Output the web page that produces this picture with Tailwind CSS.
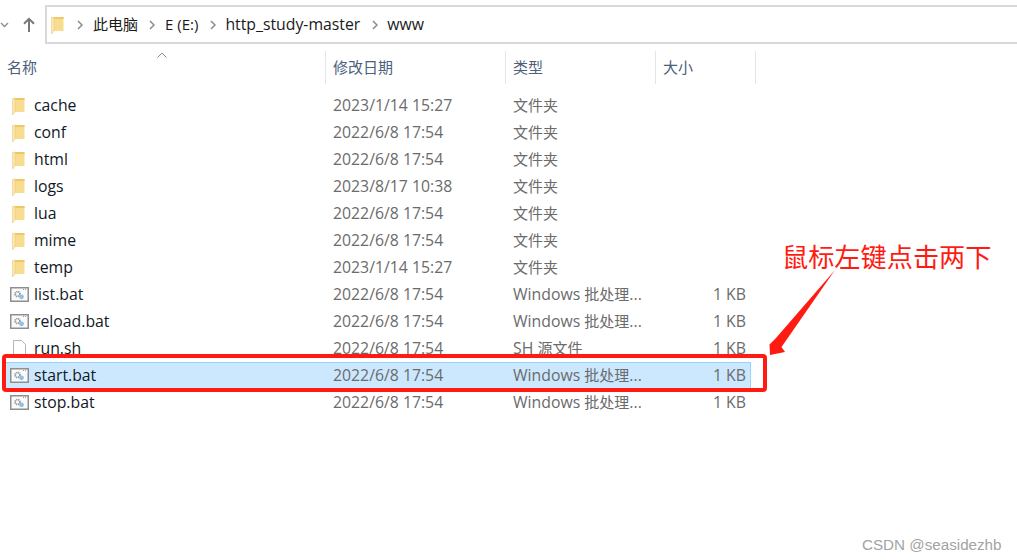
<!DOCTYPE html>
<html lang="zh-CN">

<head>
    <meta charset="UTF-8">
    <title>www</title>
    <script src="https://cdn.jsdelivr.net/npm/@tailwindcss/browser@4"></script>
</head>

<body class="bg-white font-['Open_Sans','Noto_Sans_CJK_SC',sans-serif] text-[15.8px]">
    <div class="relative w-[1017px] h-[560px] overflow-hidden">

        <!-- Address bar -->
        <div class="flex items-center h-[44px] pt-[5px]">
            <div class="flex items-center w-[45px] h-[39px] shrink-0">
                <svg class="w-[9px] h-[6px]" viewBox="0 0 9 6" fill="none" stroke="#8a8a8a" stroke-width="1.3">
                    <path d="M1 1l3.5 3.5L8 1" />
                </svg>
                <svg class="ml-[14px] w-[12px] h-[15px]" viewBox="0 0 12 15" fill="none" stroke="#777777" stroke-width="2">
                    <path d="M6 15V2M1 6.8L6 1.8l5 5" />
                </svg>
            </div>
            <div class="flex items-center flex-1 h-[39px] border-y-2 border-l-2 border-[#d9d9d9] text-[#1a1a1a]">
                <svg class="ml-[4px] w-[13px] h-[18px]" viewBox="0 0 13 18"><path d="M3 1h9.500v14H3z" fill="#f8dc8f" /><path d="M3 1h9.500v2H3z" fill="#eec865" /><path d="M0.500 1.500L3 1v14l-2.500 3z" fill="#fbe9b5" stroke="#ecc978" stroke-width="0.6" /></svg>
                <svg class="ml-[13px] w-[6px] h-[10px]" viewBox="0 0 6 10" fill="none" stroke="#8a8a8a" stroke-width="1.5">
                    <path d="M1 1l4 4-4 4" />
                </svg>
                <span class="ml-[10px] text-[15px]">此电脑</span>
                <svg class="ml-[11px] w-[6px] h-[10px]" viewBox="0 0 6 10" fill="none" stroke="#8a8a8a" stroke-width="1.5">
                    <path d="M1 1l4 4-4 4" />
                </svg>
                <span class="ml-[10px] text-[15px]">E (E:)</span>
                <svg class="ml-[12px] w-[6px] h-[10px]" viewBox="0 0 6 10" fill="none" stroke="#8a8a8a" stroke-width="1.5">
                    <path d="M1 1l4 4-4 4" />
                </svg>
                <span class="ml-[9px]">http_study-master</span>
                <svg class="ml-[12px] w-[6px] h-[10px]" viewBox="0 0 6 10" fill="none" stroke="#8a8a8a" stroke-width="1.5">
                    <path d="M1 1l4 4-4 4" />
                </svg>
                <span class="ml-[9px]">www</span>
            </div>
        </div>

        <!-- Column headers -->
        <div class="relative flex h-[33px] mt-[7px] text-[#4c607a] text-[15px]">
            <svg class="absolute left-[157px] top-[1px] w-[10px] h-[6px]" viewBox="0 0 10 6" fill="none" stroke="#8a8a8a">
                <path d="M0.5 5.5L5 1l4.500 4.500" />
            </svg>
            <div class="flex items-center w-[325px] pl-[7px]">名称</div>
            <div class="flex items-center w-[180px] pl-[7px] border-l border-[#e5e5e5]">修改日期</div>
            <div class="flex items-center w-[150px] pl-[7px] border-l border-[#e5e5e5]">类型</div>
            <div class="flex items-center w-[101px] pl-[7px] border-x border-[#e5e5e5]">大小</div>
        </div>

        <!-- File rows -->
        <div class="mt-[8px] w-[751px] pl-[5px] text-[#6b6b6b]">
            <div class="grid grid-cols-[320px_180px_150px_91px] items-center h-[27px] border border-transparent">
                <div class="flex items-center text-[#111827]"><svg class="ml-[6px] mr-[9px] w-[13px] h-[18px]" viewBox="0 0 13 18"><path d="M3 1h9.500v14H3z" fill="#f8dc8f" /><path d="M3 1h9.500v2H3z" fill="#eec865" /><path d="M0.500 1.500L3 1v14l-2.500 3z" fill="#fbe9b5" stroke="#ecc978" stroke-width="0.6" /></svg>cache</div>
                <div class="pl-[7px]">2023/1/14 15:27</div><div class="pl-[7px] text-[15px]">文件夹</div><div></div>
            </div>
            <div class="grid grid-cols-[320px_180px_150px_91px] items-center h-[27px] border border-transparent">
                <div class="flex items-center text-[#111827]"><svg class="ml-[6px] mr-[9px] w-[13px] h-[18px]" viewBox="0 0 13 18"><path d="M3 1h9.500v14H3z" fill="#f8dc8f" /><path d="M3 1h9.500v2H3z" fill="#eec865" /><path d="M0.500 1.500L3 1v14l-2.500 3z" fill="#fbe9b5" stroke="#ecc978" stroke-width="0.6" /></svg>conf</div>
                <div class="pl-[7px]">2022/6/8 17:54</div><div class="pl-[7px] text-[15px]">文件夹</div><div></div>
            </div>
            <div class="grid grid-cols-[320px_180px_150px_91px] items-center h-[27px] border border-transparent">
                <div class="flex items-center text-[#111827]"><svg class="ml-[6px] mr-[9px] w-[13px] h-[18px]" viewBox="0 0 13 18"><path d="M3 1h9.500v14H3z" fill="#f8dc8f" /><path d="M3 1h9.500v2H3z" fill="#eec865" /><path d="M0.500 1.500L3 1v14l-2.500 3z" fill="#fbe9b5" stroke="#ecc978" stroke-width="0.6" /></svg>html</div>
                <div class="pl-[7px]">2022/6/8 17:54</div><div class="pl-[7px] text-[15px]">文件夹</div><div></div>
            </div>
            <div class="grid grid-cols-[320px_180px_150px_91px] items-center h-[27px] border border-transparent">
                <div class="flex items-center text-[#111827]"><svg class="ml-[6px] mr-[9px] w-[13px] h-[18px]" viewBox="0 0 13 18"><path d="M3 1h9.500v14H3z" fill="#f8dc8f" /><path d="M3 1h9.500v2H3z" fill="#eec865" /><path d="M0.500 1.500L3 1v14l-2.500 3z" fill="#fbe9b5" stroke="#ecc978" stroke-width="0.6" /></svg>logs</div>
                <div class="pl-[7px]">2023/8/17 10:38</div><div class="pl-[7px] text-[15px]">文件夹</div><div></div>
            </div>
            <div class="grid grid-cols-[320px_180px_150px_91px] items-center h-[27px] border border-transparent">
                <div class="flex items-center text-[#111827]"><svg class="ml-[6px] mr-[9px] w-[13px] h-[18px]" viewBox="0 0 13 18"><path d="M3 1h9.500v14H3z" fill="#f8dc8f" /><path d="M3 1h9.500v2H3z" fill="#eec865" /><path d="M0.500 1.500L3 1v14l-2.500 3z" fill="#fbe9b5" stroke="#ecc978" stroke-width="0.6" /></svg>lua</div>
                <div class="pl-[7px]">2022/6/8 17:54</div><div class="pl-[7px] text-[15px]">文件夹</div><div></div>
            </div>
            <div class="grid grid-cols-[320px_180px_150px_91px] items-center h-[27px] border border-transparent">
                <div class="flex items-center text-[#111827]"><svg class="ml-[6px] mr-[9px] w-[13px] h-[18px]" viewBox="0 0 13 18"><path d="M3 1h9.500v14H3z" fill="#f8dc8f" /><path d="M3 1h9.500v2H3z" fill="#eec865" /><path d="M0.500 1.500L3 1v14l-2.500 3z" fill="#fbe9b5" stroke="#ecc978" stroke-width="0.6" /></svg>mime</div>
                <div class="pl-[7px]">2022/6/8 17:54</div><div class="pl-[7px] text-[15px]">文件夹</div><div></div>
            </div>
            <div class="grid grid-cols-[320px_180px_150px_91px] items-center h-[27px] border border-transparent">
                <div class="flex items-center text-[#111827]"><svg class="ml-[6px] mr-[9px] w-[13px] h-[18px]" viewBox="0 0 13 18"><path d="M3 1h9.500v14H3z" fill="#f8dc8f" /><path d="M3 1h9.500v2H3z" fill="#eec865" /><path d="M0.500 1.500L3 1v14l-2.500 3z" fill="#fbe9b5" stroke="#ecc978" stroke-width="0.6" /></svg>temp</div>
                <div class="pl-[7px]">2023/1/14 15:27</div><div class="pl-[7px] text-[15px]">文件夹</div><div></div>
            </div>
            <div class="grid grid-cols-[320px_180px_150px_91px] items-center h-[27px] border border-transparent">
                <div class="flex items-center text-[#111827]"><svg class="ml-[4px] mr-[5px] w-[19px] h-[15px]" viewBox="0 0 19 15"><rect x="0.750" y="0.750" width="17.500" height="13.500" fill="#fafafa" stroke="#8f8f8f" stroke-width="1.500" /><path d="M13 2.500h1M15 2.500h1" stroke="#9a9a9a" /><circle cx="7.500" cy="7" r="2.400" fill="none" stroke="#9a9a9a" stroke-width="1.800" stroke-dasharray="1.200 0.600" /><circle cx="11.500" cy="9.800" r="2.400" fill="#8fc0e6" /></svg>list.bat</div>
                <div class="pl-[7px]">2022/6/8 17:54</div><div class="pl-[7px]">Windows <span class="text-[15px]">批处理</span>...</div><div class="text-right pr-[1px]">1 KB</div>
            </div>
            <div class="grid grid-cols-[320px_180px_150px_91px] items-center h-[27px] border border-transparent">
                <div class="flex items-center text-[#111827]"><svg class="ml-[4px] mr-[5px] w-[19px] h-[15px]" viewBox="0 0 19 15"><rect x="0.750" y="0.750" width="17.500" height="13.500" fill="#fafafa" stroke="#8f8f8f" stroke-width="1.500" /><path d="M13 2.500h1M15 2.500h1" stroke="#9a9a9a" /><circle cx="7.500" cy="7" r="2.400" fill="none" stroke="#9a9a9a" stroke-width="1.800" stroke-dasharray="1.200 0.600" /><circle cx="11.500" cy="9.800" r="2.400" fill="#8fc0e6" /></svg>reload.bat</div>
                <div class="pl-[7px]">2022/6/8 17:54</div><div class="pl-[7px]">Windows <span class="text-[15px]">批处理</span>...</div><div class="text-right pr-[1px]">1 KB</div>
            </div>
            <div class="grid grid-cols-[320px_180px_150px_91px] items-center h-[27px] border border-transparent">
                <div class="flex items-center text-[#111827]"><svg class="ml-[7px] mr-[8px] w-[13px] h-[17px]" viewBox="0 0 13 17"><path d="M0.500 0.500h8l4 4v12h-12z" fill="#ffffff" stroke="#b5b5b5" /></svg>run.sh</div>
                <div class="pl-[7px]">2022/6/8 17:54</div><div class="pl-[7px]">SH <span class="text-[15px]">源文件</span></div><div class="text-right pr-[1px]">1 KB</div>
            </div>
            <div class="grid grid-cols-[320px_180px_150px_91px] items-center h-[27px] border border-[#99d1ff] bg-[#cce8ff]">
                <div class="flex items-center text-[#111827]"><svg class="ml-[4px] mr-[5px] w-[19px] h-[15px]" viewBox="0 0 19 15"><rect x="0.750" y="0.750" width="17.500" height="13.500" fill="#fafafa" stroke="#8f8f8f" stroke-width="1.500" /><path d="M13 2.500h1M15 2.500h1" stroke="#9a9a9a" /><circle cx="7.500" cy="7" r="2.400" fill="none" stroke="#9a9a9a" stroke-width="1.800" stroke-dasharray="1.200 0.600" /><circle cx="11.500" cy="9.800" r="2.400" fill="#8fc0e6" /></svg>start.bat</div>
                <div class="pl-[7px]">2022/6/8 17:54</div><div class="pl-[7px]">Windows <span class="text-[15px]">批处理</span>...</div><div class="text-right pr-[1px]">1 KB</div>
            </div>
            <div class="grid grid-cols-[320px_180px_150px_91px] items-center h-[27px] border border-transparent">
                <div class="flex items-center text-[#111827]"><svg class="ml-[4px] mr-[5px] w-[19px] h-[15px]" viewBox="0 0 19 15"><rect x="0.750" y="0.750" width="17.500" height="13.500" fill="#fafafa" stroke="#8f8f8f" stroke-width="1.500" /><path d="M13 2.500h1M15 2.500h1" stroke="#9a9a9a" /><circle cx="7.500" cy="7" r="2.400" fill="none" stroke="#9a9a9a" stroke-width="1.800" stroke-dasharray="1.200 0.600" /><circle cx="11.500" cy="9.800" r="2.400" fill="#8fc0e6" /></svg>stop.bat</div>
                <div class="pl-[7px]">2022/6/8 17:54</div><div class="pl-[7px]">Windows <span class="text-[15px]">批处理</span>...</div><div class="text-right pr-[1px]">1 KB</div>
            </div>
        </div>

        <!-- Annotation over the list -->
        <div class="absolute left-[2px] top-[354px] w-[765px] h-[38px] border-[4px] border-[#ff1a12] rounded-[4px]"></div>
        <svg class="absolute left-[765px] top-[268px] w-[75px] h-[90px]" viewBox="0 0 75 90">
            <path d="M70 2L11 70l-6.500 6.500L5 87l15-3-3.500-5z" fill="#ff1a12" />
        </svg>
        <div class="absolute left-[782px] top-[237px] text-[26.2px] leading-[38px] text-[#ff1a12] font-['Noto_Sans_CJK_SC',sans-serif]">鼠标左键点击两下</div>

        <!-- Watermark -->
        <div class="absolute left-[862px] top-[535px] text-[15.2px] leading-[20px] text-[#a3a3a3] font-['Liberation_Sans',sans-serif]">CSDN @seasidezhb</div>
    </div>
</body>

</html>
